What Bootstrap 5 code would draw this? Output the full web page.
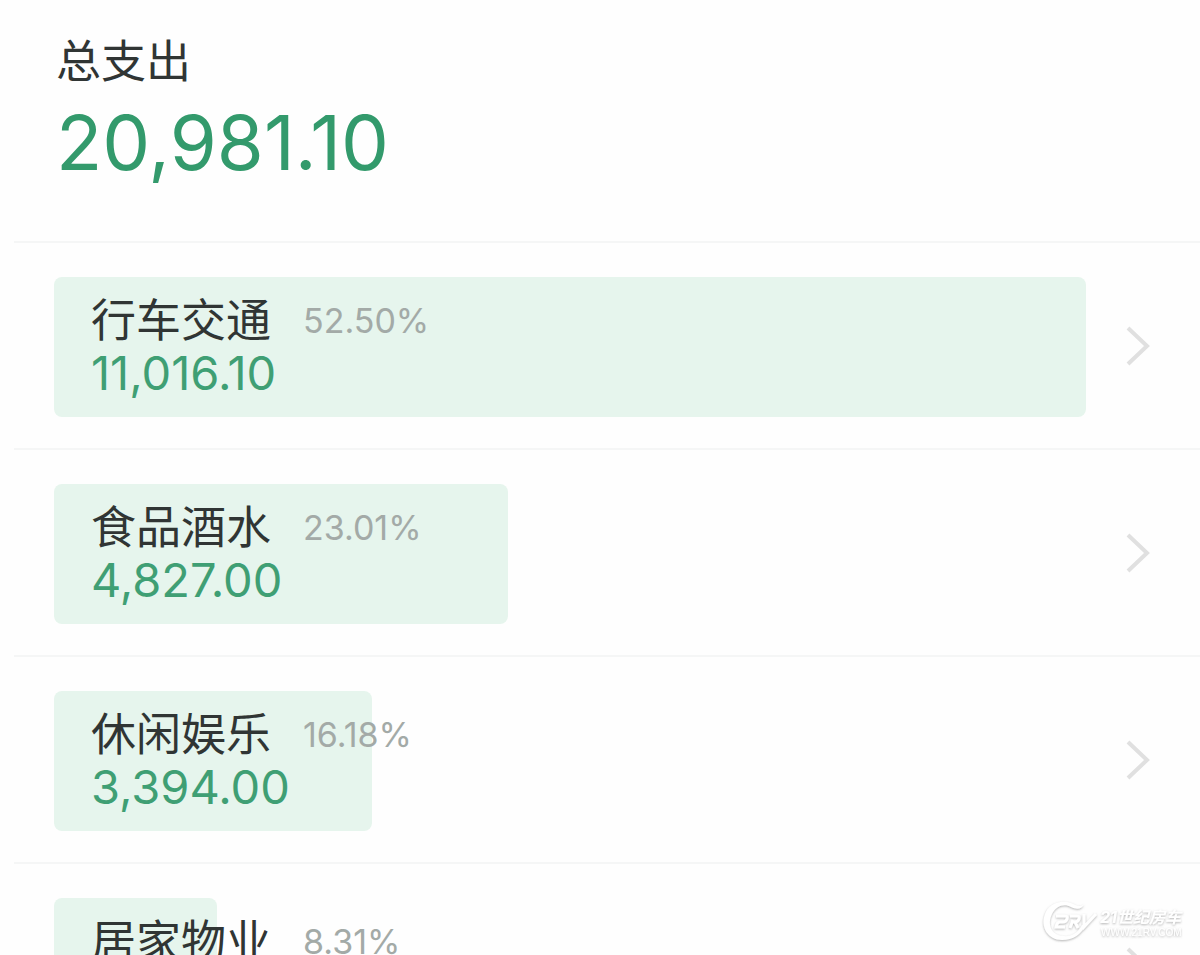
<!DOCTYPE html>
<html lang="zh-CN">
<head>
<meta charset="utf-8">
<meta name="viewport" content="width=device-width, initial-scale=1">
<title>总支出</title>
<link rel="stylesheet" href="https://cdn.jsdelivr.net/npm/bootstrap@5.3.0/dist/css/bootstrap.min.css">
<style>
  body { font-family: Inter, "Noto Sans CJK SC", sans-serif; background: #fefefe; color: #303534; }
  .summary { padding: 32px 56px 49px; }
  .title-text { font-size: 45px; line-height: 60px; font-weight: 400; }
  .total { font-size: 76px; line-height: 100px; color: #339a6c; }
  .entry { padding-right: 48px; margin-left: 14px; padding-left: 40px; border-top: 2px solid #f5f6f6; color: inherit; }
  .track { height: 140px; margin: 34px 0 31px; padding: 14px 37px; }
  .fill { background: #e6f5ed; border-radius: 8px; }
  .name-line { gap: 32px; line-height: 60px; }
  .share { font-size: 34px; color: #a3aaa7; }
  .amount { font-size: 47px; line-height: 44px; color: #3f9f74; }
  .arrow { width: 26px; height: 42px; margin-left: 40px; }
  .watermark { right: 8px; bottom: 8px; width: 152px; height: 48px; }
</style>
</head>
<body>
<main class="vh-100 overflow-hidden">
  <header class="summary">
    <h1 class="title-text m-0">总支出</h1>
    <div class="total">20,981.10</div>
  </header>
  <nav aria-label="支出分类">
    <a href="#" class="entry d-flex align-items-center text-decoration-none">
      <div class="track position-relative flex-grow-1">
        <div class="fill position-absolute top-0 start-0 h-100" style="width:100%"></div>
        <div class="position-relative">
          <div class="name-line d-flex align-items-center"><span class="title-text">行车交通</span><span class="share">52.50%</span></div>
          <div class="amount">11,016.10</div>
        </div>
      </div>
      <svg class="arrow flex-shrink-0" viewBox="0 0 26 42" fill="none" stroke="#e0e0e0" stroke-width="4" aria-hidden="true"><path d="M2 3 21 21 2 39"/></svg>
    </a>
    <a href="#" class="entry d-flex align-items-center text-decoration-none">
      <div class="track position-relative flex-grow-1">
        <div class="fill position-absolute top-0 start-0 h-100" style="width:44%"></div>
        <div class="position-relative">
          <div class="name-line d-flex align-items-center"><span class="title-text">食品酒水</span><span class="share">23.01%</span></div>
          <div class="amount">4,827.00</div>
        </div>
      </div>
      <svg class="arrow flex-shrink-0" viewBox="0 0 26 42" fill="none" stroke="#e0e0e0" stroke-width="4" aria-hidden="true"><path d="M2 3 21 21 2 39"/></svg>
    </a>
    <a href="#" class="entry d-flex align-items-center text-decoration-none">
      <div class="track position-relative flex-grow-1">
        <div class="fill position-absolute top-0 start-0 h-100" style="width:30.8%"></div>
        <div class="position-relative">
          <div class="name-line d-flex align-items-center"><span class="title-text">休闲娱乐</span><span class="share">16.18%</span></div>
          <div class="amount">3,394.00</div>
        </div>
      </div>
      <svg class="arrow flex-shrink-0" viewBox="0 0 26 42" fill="none" stroke="#e0e0e0" stroke-width="4" aria-hidden="true"><path d="M2 3 21 21 2 39"/></svg>
    </a>
    <a href="#" class="entry d-flex align-items-center text-decoration-none">
      <div class="track position-relative flex-grow-1">
        <div class="fill position-absolute top-0 start-0 h-100" style="width:15.8%"></div>
        <div class="position-relative">
          <div class="name-line d-flex align-items-center"><span class="title-text">居家物业</span><span class="share">8.31%</span></div>
        </div>
      </div>
      <svg class="arrow flex-shrink-0" viewBox="0 0 26 42" fill="none" stroke="#e0e0e0" stroke-width="4" aria-hidden="true"><path d="M2 3 21 21 2 39"/></svg>
    </a>
  </nav>
</main>
<svg class="watermark position-fixed" viewBox="0 0 152 48" role="img" aria-label="21世纪房车">
  <defs><filter id="soft" x="-10%" y="-20%" width="120%" height="140%"><feDropShadow dx="0" dy="1" stdDeviation="1" flood-color="#777" flood-opacity=".55"/></filter></defs>
  <g filter="url(#soft)" fill="#fff">
    <path d="M44 5C40 9 36 6 31 4 19 0 8 6 5 15 0 28 8 41 22 41c11 0 20-6 23-15h-3c-4 8-11 12-19 11C11 36 7 25 12 15 16 7 24 4 31 8c6 3 11 2 13-3z"/>
    <g fill="none" stroke="#fff" stroke-width="3">
      <path d="M16 17h9q3 0 2 3t-4 3h-3q-3 0-4 5h9M30 17h7q3 0 2 3t-4 3h-4M30 29l3-8M35 23l3 6"/>
      <path d="M44 15v13L56 15"/>
    </g>
    <text x="60" y="24" font-family="Inter, 'Noto Sans CJK SC', sans-serif" font-style="italic" font-weight="700" font-size="16">21世纪房车</text>
    <text x="61" y="37" font-family="Liberation Sans, sans-serif" font-size="10">WWW.21RV.COM</text>
  </g>
</svg>
<script src="https://cdn.jsdelivr.net/npm/bootstrap@5.3.0/dist/js/bootstrap.bundle.min.js"></script>
</body>
</html>
